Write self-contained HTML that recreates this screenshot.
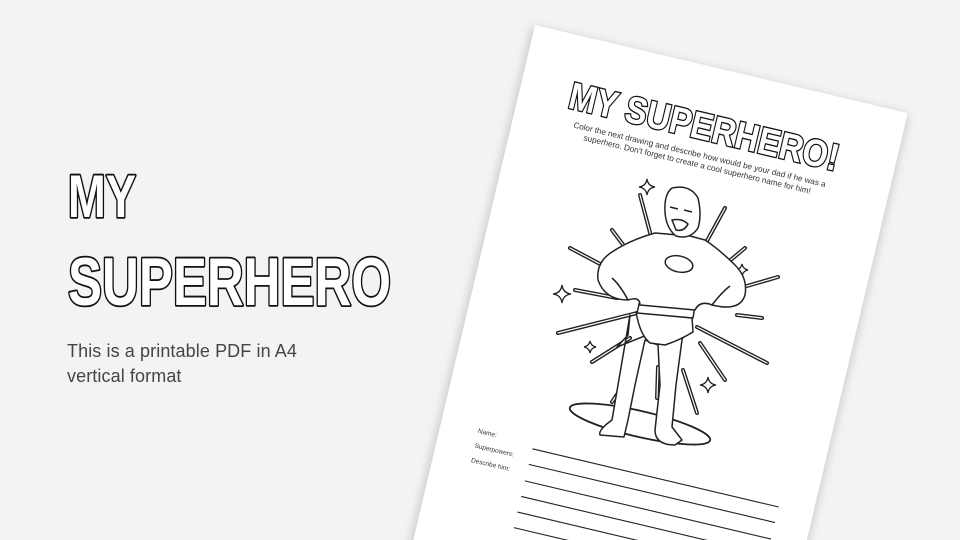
<!DOCTYPE html>
<html><head><meta charset="utf-8"><style>
html,body{margin:0;padding:0}
body{width:960px;height:540px;background:#f3f3f3;position:relative;overflow:hidden;font-family:"Liberation Sans",sans-serif}
.sub{position:absolute;left:67px;top:339px;font-size:18px;line-height:25px;color:#454545;letter-spacing:0.1px}
svg{position:absolute;left:0;top:0}
</style></head><body>
<svg width="960" height="540" viewBox="0 0 960 540">
<defs><filter id="sh" x="-20%" y="-20%" width="140%" height="140%"><feGaussianBlur stdDeviation="5"/></filter>
<clipPath id="cp"><rect x="0" y="0" width="960" height="540"/></clipPath></defs>
<!-- left title -->
<g font-family="Liberation Sans Narrow, Liberation Sans, sans-serif" font-weight="bold" fill="#fff" stroke="#111" stroke-width="3.6" stroke-linejoin="round" paint-order="stroke">
<text x="68" y="217" font-size="60" textLength="68" lengthAdjust="spacingAndGlyphs">MY</text>
<text x="68" y="305" font-size="68" textLength="323" lengthAdjust="spacingAndGlyphs">SUPERHERO</text>
</g>
<g fill="none" stroke="#111" stroke-width="1" font-family="Liberation Sans Narrow, Liberation Sans, sans-serif" font-weight="bold">
</g>
<!-- paper -->
<g clip-path="url(#cp)">
<g transform="translate(535,25) rotate(13.3)">
<rect x="-2" y="2" width="386" height="580" fill="#000" opacity="0.18" filter="url(#sh)"/>
<rect x="0" y="0" width="383" height="580" fill="#fff"/>
<text x="188" y="73" font-family="Liberation Sans Narrow, Liberation Sans, sans-serif" font-weight="bold" font-size="38" text-anchor="middle" fill="#fff" stroke="#111" stroke-width="2.6" paint-order="stroke" textLength="276" lengthAdjust="spacingAndGlyphs">MY SUPERHERO!</text>
<g font-size="8.2" fill="#333" text-anchor="middle">
<text x="190" y="91">Color the next drawing and describe how would be your dad if he was a</text>
<text x="190" y="101">superhero. Don't forget to create a cool superhero name for him!</text>
</g>
<g font-size="6.5" fill="#333">
<text x="38" y="410">Name:</text>
<text x="38" y="425">Superpowers:</text>
<text x="38" y="440">Describe him:</text>
</g>
<g stroke="#222" stroke-width="1.1">
<line x1="95" y1="413" x2="348" y2="413"/>
<line x1="95" y1="429" x2="348" y2="429"/>
<line x1="95" y1="446" x2="348" y2="446"/>
<line x1="95" y1="462" x2="348" y2="462"/>
<line x1="95" y1="478" x2="348" y2="478"/>
<line x1="95" y1="494" x2="348" y2="494"/>
</g>
<text x="205" y="188" transform="rotate(40 205 188)" font-family="Liberation Sans Narrow, sans-serif" font-weight="bold" font-size="20" fill="#fff" stroke="#111" stroke-width="2" paint-order="stroke">WOW!</text>
</g>
</g>
<!-- rays -->
<g stroke-linecap="round">
<g stroke="#222" stroke-width="4">
<path d="M640 195L652 240M612 230L627 250M570 248L602 265M575 290L617 298M558 333L637 313M592 362L630 338M725 208L702 250M745 248L727 263M778 277L740 288M762 318L737 315M767 363L697 327M725 380L700 343M697 413L683 370M612 402L622 387M657 398L658 367"/>
</g>
<g stroke="#fff" stroke-width="1.2">
<path d="M640 195L652 240M612 230L627 250M570 248L602 265M575 290L617 298M558 333L637 313M592 362L630 338M725 208L702 250M745 248L727 263M778 277L740 288M762 318L737 315M767 363L697 327M725 380L700 343M697 413L683 370M612 402L622 387M657 398L658 367"/>
</g>
</g>
<!-- sparkles -->
<g fill="#fff" stroke="#222" stroke-width="1.3">
<path d="M647 179Q648 186 655 187Q648 188 647 195Q646 188 639 187Q646 186 647 179Z"/>
<path d="M562 285Q563 293 571 294Q563 295 562 303Q561 295 553 294Q561 293 562 285Z"/>
<path d="M590 341Q591 346 596 347Q591 348 590 353Q589 348 584 347Q589 346 590 341Z"/>
<path d="M708 377Q709 384 716 385Q709 386 708 393Q707 386 700 385Q707 384 708 377Z"/>
<path d="M742 264Q743 269 748 270Q743 271 742 276Q741 271 736 270Q741 269 742 264Z"/>
</g>
<!-- platform -->
<ellipse cx="640" cy="424" rx="72" ry="13" transform="rotate(13 640 424)" fill="#fff" stroke="#222" stroke-width="1.8"/>
<!-- hero -->
<g fill="#fff" stroke="#222" stroke-width="1.5" stroke-linejoin="round">
<path d="M617 347L628 335L630 315L618 385L612 420Q598 430 600 435L624 437L628 420L635 385L645 340L658 345L660 385L655 430Q655 445 675 445L682 440L672 427L676 385L682 340L690 318Z"/>
<path d="M636 312L692 318L693 332Q680 340 665 345L650 343Q640 335 636 312Z"/>
<path d="M640 300L695 306L693 318L637 313Z"/>
<path d="M655 233Q630 240 612 252Q596 262 598 280Q605 300 628 300Q640 296 640 305L695 310Q700 300 712 305Q740 312 745 295Q748 278 735 265Q720 250 705 240L690 236Z"/>
<path d="M672 188Q690 184 698 198Q702 215 698 228Q690 240 676 236Q666 228 665 212Q664 194 672 188Z"/>
<ellipse cx="679" cy="264" rx="14" ry="8" transform="rotate(12 679 264)"/>
<path d="M672 220Q682 218 688 224Q684 232 676 230Z" fill="#fff"/>
<path d="M670 207L678 209M684 210L692 212"/>
<path d="M628 300Q620 285 612 278M712 305Q722 292 730 286" fill="none"/>
</g>
</svg>
<div class="sub">This is a printable PDF in A4<br>vertical format</div>
</body></html>
